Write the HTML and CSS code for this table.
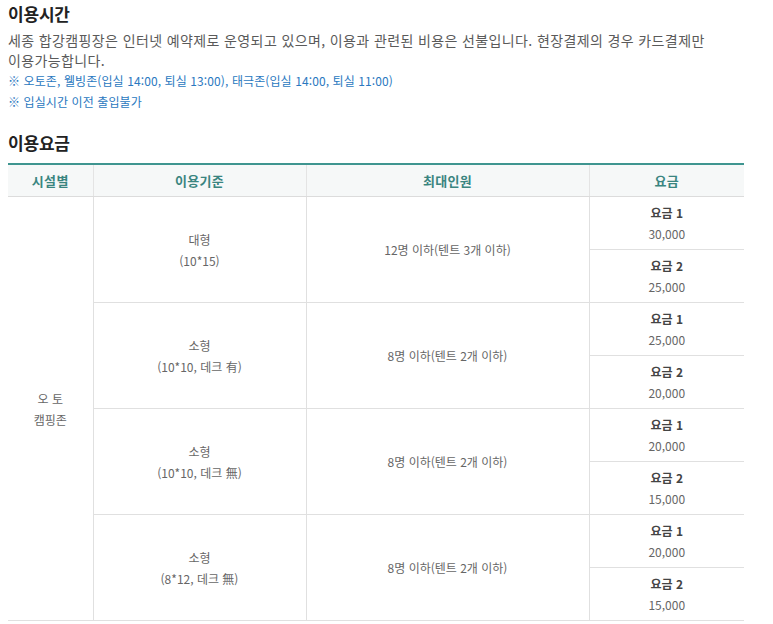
FILE: index.html
```html
<!DOCTYPE html>
<html lang="ko">
<head>
<meta charset="utf-8">
<link rel="stylesheet" href="styles.css">
</head>
<body>
<div class="page">
  <h2 class="title">이용시간</h2>
  <p class="desc">세종 합강캠핑장은 인터넷 예약제로 운영되고 있으며, 이용과 관련된 비용은 선불입니다. 현장결제의 경우 카드결제만 이용가능합니다.</p>
  <p class="note">※ 오토존, 웰빙존(입실 14:00, 퇴실 13:00), 태극존(입실 14:00, 퇴실 11:00)</p>
  <p class="note">※ 입실시간 이전 출입불가</p>

  <h2 class="title title-fee">이용요금</h2>
  <table class="fee">
    <colgroup>
      <col class="c1"><col class="c2"><col class="c3"><col class="c4">
    </colgroup>
    <thead>
      <tr><th>시설별</th><th>이용기준</th><th>최대인원</th><th>요금</th></tr>
    </thead>
    <tbody>
      <tr>
        <td rowspan="8" class="first">오 토<br>캠핑존</td>
        <td rowspan="2">대형<br>(10*15)</td>
        <td rowspan="2">12명 이하(텐트 3개 이하)</td>
        <td class="price"><b>요금 1</b><br>30,000</td>
      </tr>
      <tr><td class="price"><b>요금 2</b><br>25,000</td></tr>
      <tr>
        <td rowspan="2">소형<br>(10*10, 데크 有)</td>
        <td rowspan="2">8명 이하(텐트 2개 이하)</td>
        <td class="price"><b>요금 1</b><br>25,000</td>
      </tr>
      <tr><td class="price"><b>요금 2</b><br>20,000</td></tr>
      <tr>
        <td rowspan="2">소형<br>(10*10, 데크 無)</td>
        <td rowspan="2">8명 이하(텐트 2개 이하)</td>
        <td class="price"><b>요금 1</b><br>20,000</td>
      </tr>
      <tr><td class="price"><b>요금 2</b><br>15,000</td></tr>
      <tr>
        <td rowspan="2">소형<br>(8*12, 데크 無)</td>
        <td rowspan="2">8명 이하(텐트 2개 이하)</td>
        <td class="price"><b>요금 1</b><br>20,000</td>
      </tr>
      <tr><td class="price"><b>요금 2</b><br>15,000</td></tr>
    </tbody>
  </table>
</div>
</body>
</html>
```

FILE: styles.css
```css
html, body {
  margin: 0;
  padding: 0;
  background: #fff;
}
body {
  font-family: "Noto Sans CJK KR", "Noto Sans", sans-serif;
  color: #555;
}
.page {
  width: 736px;
  padding: 2px 0 0 8px;
}
.title {
  margin: 0;
  font-size: 17px;
  line-height: 24px;
  font-weight: 700;
  color: #222;
  letter-spacing: -0.2px;
}
.desc {
  margin: 4px 0 0;
  font-size: 14px;
  line-height: 20px;
  letter-spacing: 0.38px;
  word-break: keep-all;
  color: #5a5a5a;
}
.note {
  margin: 0;
  font-size: 12px;
  line-height: 21px;
  letter-spacing: 0.1px;
  color: #2a78c0;
}
.title-fee {
  margin-top: 19px;
}
.fee {
  margin-top: 8px;
  width: 736px;
  border-collapse: collapse;
  table-layout: fixed;
  border-top: 2px solid #3f9590;
  border-bottom: 1px solid #dcdcdc;
}
.c1 { width: 85px; }
.c2 { width: 213px; }
.c3 { width: 283px; }
.c4 { width: 155px; }
.fee th {
  height: 31px;
  padding: 0;
  background: #f6f8f8;
  color: #3a8580;
  font-size: 13px;
  font-weight: 700;
  border-bottom: 1px solid #dcdcdc;
  border-left: 1px solid #e4e4e4;
  letter-spacing: 0.3px;
}
.fee th:first-child { border-left: 0; }
.fee td {
  padding: 0;
  text-align: center;
  font-size: 12px;
  line-height: 21px;
  letter-spacing: 0;
  color: #666;
  border-left: 1px solid #e0e0e0;
  border-bottom: 1px solid #e0e0e0;
}
.fee td.first { border-left: 0; }
.fee td.price { height: 52px; }
.fee td.price b {
  font-weight: 700;
  color: #444;
  font-size: 12px;
}
```
